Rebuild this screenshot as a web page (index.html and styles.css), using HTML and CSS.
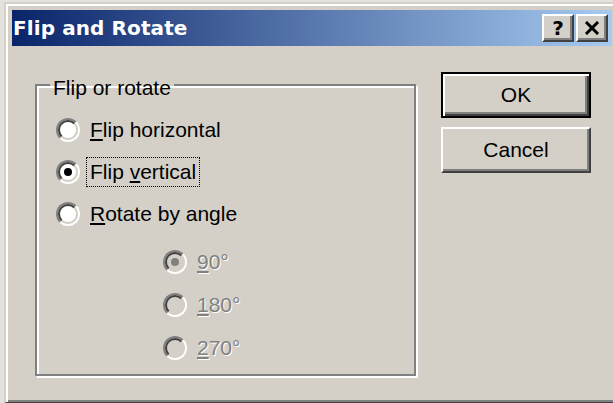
FILE: index.html
```html
<!DOCTYPE html>
<html lang="en">
<head>
<meta charset="utf-8">
<title>Flip and Rotate</title>
<link rel="stylesheet" href="styles.css">
</head>
<body>
<div class="window">
  <div class="titlebar">
    <span class="title">Flip and Rotate</span>
    <div class="caption-buttons">
      <button class="caption-btn help" type="button">?</button>
      <button class="caption-btn close" type="button" aria-label="Close">
        <svg width="16" height="14" viewBox="0 0 16 14"><path d="M2 1 L14 13 M14 1 L2 13" stroke="#000" stroke-width="3" fill="none"/></svg>
      </button>
    </div>
  </div>
  <div class="client">
    <fieldset class="group">
      <legend class="group-label">Flip or rotate</legend>
      <div class="option">
        <span class="radio"><span class="radio-inner"></span></span>
        <span class="label"><u>F</u>lip horizontal</span>
      </div>
      <div class="option">
        <span class="radio"><span class="radio-inner checked"></span></span>
        <span class="label focused">Flip <u>v</u>ertical</span>
      </div>
      <div class="option">
        <span class="radio"><span class="radio-inner"></span></span>
        <span class="label"><u>R</u>otate by angle</span>
      </div>
      <div class="angles">
        <div class="option sub disabled">
          <span class="radio"><span class="radio-inner checked"></span></span>
          <span class="label"><u>9</u>0°</span>
        </div>
        <div class="option sub disabled">
          <span class="radio"><span class="radio-inner"></span></span>
          <span class="label"><u>1</u>80°</span>
        </div>
        <div class="option sub disabled">
          <span class="radio"><span class="radio-inner"></span></span>
          <span class="label"><u>2</u>70°</span>
        </div>
      </div>
    </fieldset>
    <div class="actions">
      <button class="btn default" type="button">OK</button>
      <button class="btn" type="button">Cancel</button>
    </div>
  </div>
</div>
</body>
</html>
```

FILE: styles.css
```css
* { box-sizing: border-box; }

html, body {
  margin: 0;
  padding: 0;
  width: 613px;
  height: 403px;
  overflow: hidden;
  background: #e4e2dd;
}

body {
  font-family: "Liberation Sans", Arial, sans-serif;
  font-size: 21px;
  color: #000;
}

/* classic 3D window frame */
.window {
  margin: 2px 0 0 4px;
  width: 616px;
  height: 402px;
  background: #d4d0c8;
  border: 2px solid;
  border-color: #d4d0c8 #404040 #404040 #d4d0c8;
  box-shadow: inset 2px 2px 0 #fff, inset -2px -2px 0 #808080;
  padding: 6px;
}

.titlebar {
  height: 36px;
  display: flex;
  align-items: center;
  padding: 0 4px 0 1px;
  background: linear-gradient(to right, #0a246a, #a6caf0);
}

.title {
  font-family: "DejaVu Sans", Verdana, sans-serif;
  font-weight: bold;
  font-size: 20px;
  color: #fff;
  letter-spacing: 0.1px;
}

.caption-buttons {
  margin-left: auto;
  display: flex;
  gap: 2px;
}

.caption-btn {
  width: 32px;
  height: 28px;
  padding: 0;
  display: flex;
  align-items: center;
  justify-content: center;
  background: #d4d0c8;
  border: 2px solid;
  border-color: #fff #404040 #404040 #fff;
  box-shadow: inset -2px -2px 0 #808080;
  font-family: "DejaVu Sans", Verdana, sans-serif;
  font-weight: bold;
  font-size: 20px;
  line-height: 1;
  color: #000;
}

.client {
  display: flex;
  align-items: flex-start;
}

/* etched group box */
.group {
  margin: 24px 0 0 23px;
  width: 381px;
  height: 306px;
  padding: 9px 0 0 19px;
  border: 2px solid #808080;
  box-shadow: inset 2px 2px 0 #fff, 2px 2px 0 #fff;
}

/* taller top padding pushes the caption text below the border line */
.group-label {
  padding: 6px 3px 0;
  margin-left: -6px;
  line-height: 24px;
  font-size: 21px;
}

.option {
  display: flex;
  align-items: center;
  height: 42px;
  gap: 10px;
}

.angles {
  margin-top: 5px;
  padding-left: 107px;
}

.option.sub {
  height: 43px;
}

.radio {
  width: 24px;
  height: 24px;
  border-radius: 50%;
  border: 2px solid;
  border-color: #808080 #fff #fff #808080;
  flex: none;
}

.radio-inner {
  display: flex;
  align-items: center;
  justify-content: center;
  width: 100%;
  height: 100%;
  border-radius: 50%;
  border: 2px solid;
  border-color: #404040 #d4d0c8 #d4d0c8 #404040;
  background: #fff;
}

.radio-inner.checked::after {
  content: "";
  width: 8px;
  height: 8px;
  border-radius: 50%;
  background: #000;
}

.disabled .radio-inner {
  background: #d4d0c8;
}

.disabled .radio-inner.checked::after {
  background: #808080;
}

.label {
  line-height: 28px;
  white-space: nowrap;
}

.label u {
  text-decoration-thickness: 2px;
  text-underline-offset: 2px;
}

.label.focused {
  border: 1px dotted #000;
  margin: 0 -4px;
  padding: 0 3px;
  line-height: 28px;
}

.disabled .label {
  color: #808080;
  text-shadow: 1px 1px 0 #fff;
}

.actions {
  margin: 26px 0 0 25px;
  display: flex;
  flex-direction: column;
  gap: 9px;
}

.btn {
  width: 150px;
  height: 46px;
  padding: 0;
  background: #d4d0c8;
  border: 2px solid;
  border-color: #fff #404040 #404040 #fff;
  box-shadow: inset -2px -2px 0 #808080;
  font-family: "Liberation Sans", Arial, sans-serif;
  font-size: 21px;
  color: #000;
}

.btn.default {
  border: 2px solid #000;
  box-shadow: inset 2px 2px 0 #fff, inset -2px -2px 0 #404040, inset -4px -4px 0 #808080;
}
```
